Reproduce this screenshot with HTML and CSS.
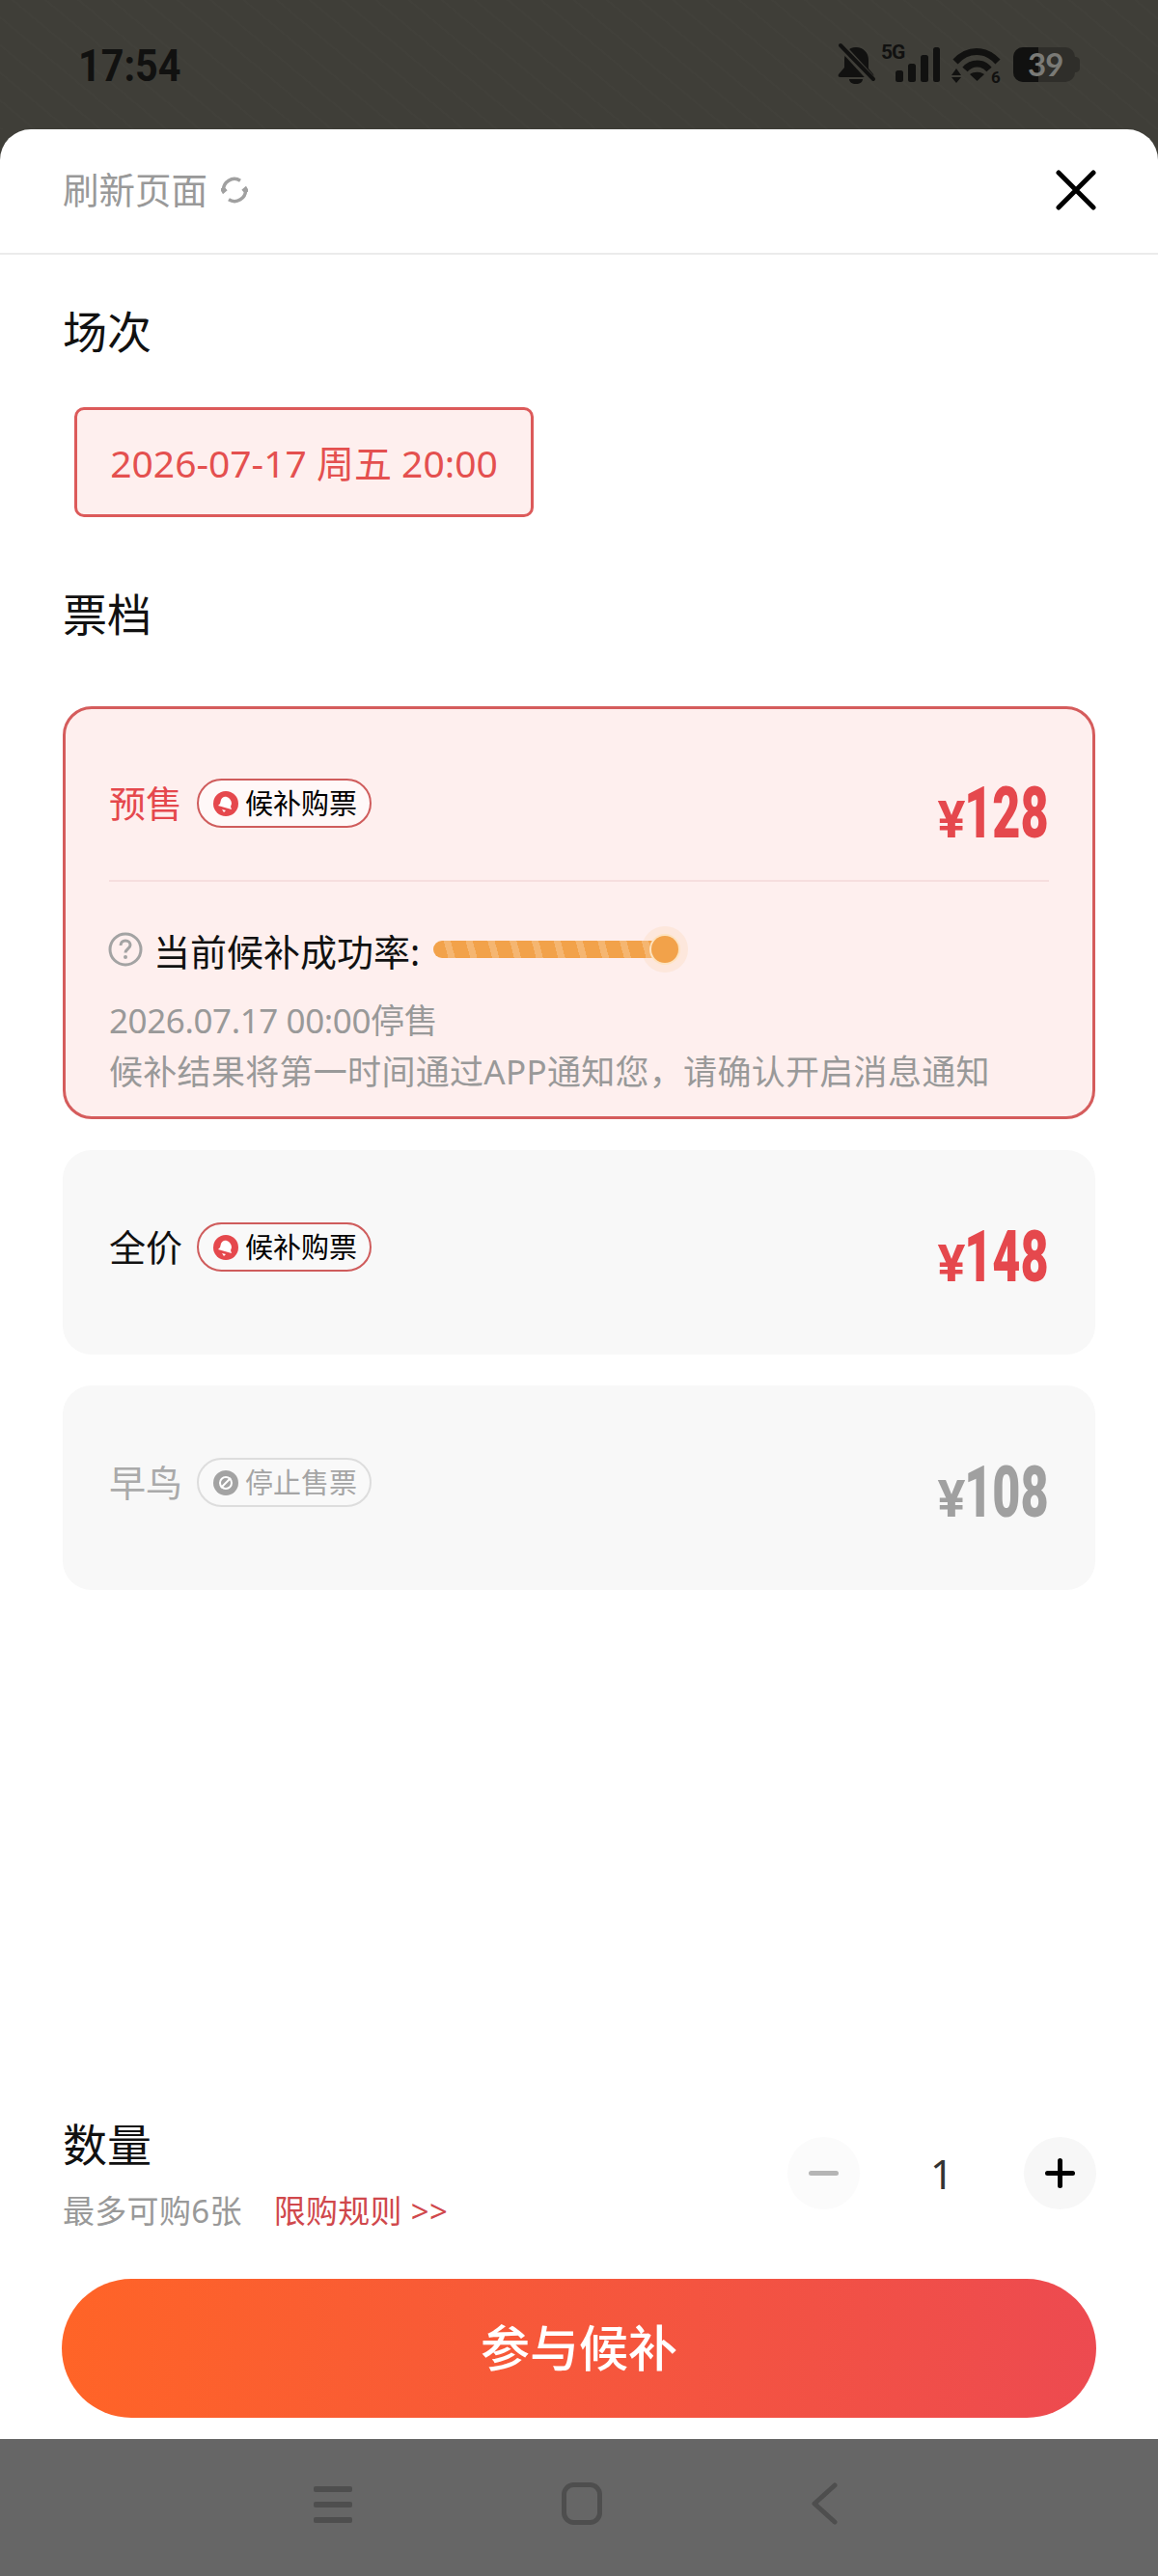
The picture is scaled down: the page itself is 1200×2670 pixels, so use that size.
FILE: index.html
```html
<!DOCTYPE html>
<html lang="zh">
<head>
  <meta charset="UTF-8">
  <meta name="viewport" content="width=device-width, initial-scale=1.0">
  <title>参与候补</title>
  <link rel="stylesheet" href="styles.css">
</head>
<body>
  <div class="phone">
    <!-- Status bar -->
    <div class="status-bar">
      <span class="clock">17:54</span>
      <svg class="status-icons" width="252" height="50" viewBox="870 43 252 50">
        <g fill="#111110">
          <path d="M889 50c-8 0-12 6-12 13v8l-6 7c-1 2 0 3 2 3h32c2 0 3-1 2-3l-5-6v-9c0-7-5-13-13-13z"/>
          <path d="M882 83h14c0 3-3 5-7 5s-7-2-7-5z"/>
        </g>
        <path d="M873 48l33 36" stroke="#3f3e38" stroke-width="8"/>
        <path d="M873 48l34 35" stroke="#111110" stroke-width="4" stroke-linecap="round"/>
        <text class="status-net" x="915" y="62">5G</text>
        <g fill="#111110">
          <rect x="930" y="74" width="8" height="12" rx="2.5"/>
          <rect x="943" y="67" width="8" height="19" rx="2.5"/>
          <rect x="956" y="58" width="8" height="28" rx="2.5"/>
          <rect x="969" y="50" width="7" height="36" rx="2.5"/>
          <path d="M1007 78c4-3 11-3 15 0l-7.500 7z"/>
          <path d="M993 72l-5 7h10zM993 87l-5-6h10z"/>
        </g>
        <g fill="none" stroke="#111110" stroke-width="7">
          <path d="M992 65c13-14 31-14 44 0"/>
          <path d="M1002 73c7-8 18-8 25 0"/>
        </g>
        <text class="status-wifi" x="1029" y="87">6</text>
        <rect x="1052" y="50" width="64" height="36" rx="10" fill="#2f2e2a"/>
        <path d="M1062 50h16v36h-16a10 10 0 0 1-10-10v-16a10 10 0 0 1 10-10z" fill="#111110"/>
        <path d="M1116 60c3 0 5 2 5 4v8c0 2-2 4-5 4z" fill="#2f2e2a"/>
        <text class="status-batt" x="1067" y="80">39</text>
      </svg>
    </div>

    <div class="sheet">
      <!-- Header -->
      <div class="sheet-header">
        <div class="refresh">
          <span>刷新页面</span>
          <svg width="28" height="28" viewBox="0 0 28 28" fill="none" stroke="#a0a0a0" stroke-width="3.500">
            <path d="M20 4.200A11.500 11.500 0 0 0 2.500 15"/>
            <path d="M0.500 12l2 3.500 3-2.500"/>
            <path d="M8 23.800A11.500 11.500 0 0 0 25.500 13"/>
            <path d="M27.500 16l-2-3.500-3 2.500"/>
          </svg>
        </div>
        <svg width="42" height="42" viewBox="0 0 42 42" stroke="#000" stroke-width="5" stroke-linecap="round">
          <path d="M3 3l36 36M39 3L3 39"/>
        </svg>
      </div>

      <div class="sheet-body">
        <h2 class="section-title">场次</h2>
        <div class="session-chip">2026-07-17 周五 20:00</div>

        <h2 class="section-title tickets-title">票档</h2>

        <!-- Ticket cards -->
        <div class="ticket ticket-active">
          <div class="ticket-row">
            <div class="ticket-name">
              <span class="name-text name-red">预售</span>
              <span class="pill">
                <svg class="pill-icon" width="26" height="26" viewBox="0 0 26 26">
                  <circle cx="13" cy="13" r="13" fill="#e5484d"/>
                  <path d="M14 6c-3-1-5 1-6 3l-1 4-2 2 14 4-1-3 1-3c0-3-2-6-5-7z" fill="#fff"/>
                  <path d="M9 19l4 1-2 2z" fill="#fff"/>
                </svg>
                候补购票
              </span>
            </div>
            <div class="price"><span class="yen">¥</span><span class="price-num">128</span></div>
          </div>
          <div class="ticket-detail">
            <div class="rate">
              <svg width="36" height="36" viewBox="0 0 36 36">
                <circle cx="18" cy="18" r="16" fill="none" stroke="#a3a3a3" stroke-width="3"/>
                <path d="M13 14c0-3 2-5 5-5s5 2 5 4.500c0 4-5 4-5 8" fill="none" stroke="#a3a3a3" stroke-width="3"/>
                <circle cx="18" cy="26" r="2" fill="#a3a3a3"/>
              </svg>
              <span class="rate-label">当前候补成功率:</span>
              <div class="rate-track"><span class="rate-knob"></span></div>
            </div>
            <p class="ticket-note note-date">2026.07.17 00:00停售</p>
            <p class="ticket-note note-info">候补结果将第一时间通过APP通知您，请确认开启消息通知</p>
          </div>
        </div>

        <div class="ticket">
          <div class="ticket-row">
            <div class="ticket-name">
              <span class="name-text">全价</span>
              <span class="pill">
                <svg class="pill-icon" width="26" height="26" viewBox="0 0 26 26">
                  <circle cx="13" cy="13" r="13" fill="#e5484d"/>
                  <path d="M14 6c-3-1-5 1-6 3l-1 4-2 2 14 4-1-3 1-3c0-3-2-6-5-7z" fill="#fff"/>
                  <path d="M9 19l4 1-2 2z" fill="#fff"/>
                </svg>
                候补购票
              </span>
            </div>
            <div class="price"><span class="yen">¥</span><span class="price-num">148</span></div>
          </div>
        </div>

        <div class="ticket ticket-off">
          <div class="ticket-row">
            <div class="ticket-name">
              <span class="name-text">早鸟</span>
              <span class="pill">
                <svg class="pill-icon" width="26" height="26" viewBox="0 0 26 26">
                  <circle cx="13" cy="13" r="13" fill="#a3a3a3"/>
                  <circle cx="13" cy="13" r="6" fill="none" stroke="#fff" stroke-width="2"/>
                  <path d="M8 18l10-10" stroke="#fff" stroke-width="2"/>
                </svg>
                停止售票
              </span>
            </div>
            <div class="price"><span class="yen">¥</span><span class="price-num">108</span></div>
          </div>
        </div>
      </div>

      <!-- Quantity and submit -->
      <div class="sheet-footer">
        <div class="quantity">
          <div>
            <h2 class="section-title">数量</h2>
            <div class="quantity-sub">
              <span>最多可购6张</span>
              <span class="rules">限购规则 &gt;&gt;</span>
            </div>
          </div>
          <div class="stepper">
            <span class="step-btn step-minus"></span>
            <span class="step-value">1</span>
            <span class="step-btn step-plus"></span>
          </div>
        </div>
        <div class="submit">参与候补</div>
      </div>
    </div>

    <!-- Android nav bar -->
    <div class="nav-bar">
      <svg width="42" height="42" viewBox="0 0 42 42" fill="#4e4e4e">
        <rect x="1" y="3" width="40" height="6" rx="2"/>
        <rect x="1" y="19" width="40" height="6" rx="2"/>
        <rect x="1" y="35" width="40" height="6" rx="2"/>
      </svg>
      <svg width="42" height="44" viewBox="0 0 42 44" fill="none" stroke="#4e4e4e" stroke-width="5">
        <rect x="2.500" y="2.500" width="37" height="39" rx="10"/>
      </svg>
      <svg width="28" height="44" viewBox="0 0 28 44" fill="none" stroke="#4e4e4e" stroke-width="5" stroke-linecap="round" stroke-linejoin="round">
        <path d="M25 3L4 22l21 19"/>
      </svg>
    </div>
  </div>
</body>
</html>
```

FILE: styles.css
```css
body {
  margin: 0;
  background-color: #666;
  font-family: "Noto Sans", "Noto Sans CJK SC", sans-serif;
}

h2, p {
  margin: 0;
  font-weight: normal;
}

.phone {
  display: flex;
  flex-direction: column;
  height: 2670px;
  background-color: #3f3e38;
}

.status-bar {
  display: flex;
  align-items: center;
  justify-content: space-between;
  height: 134px;
  padding: 0 80px 0 81px;
  background-color: #3f3e38;
  background-image: repeating-linear-gradient(40deg, rgba(255, 255, 255, 0.012) 0 2px, transparent 2px 22px);
}

.clock {
  display: inline-block;
  font-family: "Roboto", sans-serif;
  font-size: 47px;
  font-weight: bold;
  color: #111110;
  transform: scaleX(0.88);
  transform-origin: left center;
}

.status-net {
  font-family: "Roboto", sans-serif;
  font-size: 21px;
  font-weight: bold;
  letter-spacing: -1px;
  fill: #111110;
}

.status-wifi {
  font-family: "Roboto", sans-serif;
  font-size: 17px;
  font-weight: bold;
  fill: #111110;
}

.status-batt {
  font-family: "Lato", sans-serif;
  font-size: 33px;
  font-weight: bold;
  letter-spacing: -1px;
  fill: #7a7a76;
}

.sheet {
  display: flex;
  flex-direction: column;
  height: 2394px;
  background-color: #fff;
  border-radius: 32px 32px 0 0;
}

.sheet-header {
  box-sizing: border-box;
  display: flex;
  align-items: center;
  justify-content: space-between;
  height: 130px;
  padding: 0 64px 2px 65px;
  border-bottom: 2px solid #ebebeb;
}

.refresh {
  display: flex;
  align-items: center;
  gap: 14px;
  font-size: 37.500px;
  color: #999;
}

.refresh span {
  margin-bottom: 6px;
}

.sheet-body {
  padding: 47px 65px 0;
}

.section-title {
  font-size: 46px;
  line-height: 64px;
  color: #111;
}

.session-chip {
  box-sizing: border-box;
  display: flex;
  align-items: center;
  justify-content: center;
  width: 476px;
  height: 114px;
  margin: 47px 0 0 12px;
  padding-bottom: 3px;
  background-color: #feefee;
  border: 3px solid #dc5a5a;
  border-radius: 10px;
  font-size: 39px;
  color: #e4504f;
}

.tickets-title {
  margin-top: 68px;
  margin-bottom: 64px;
}

.ticket {
  box-sizing: border-box;
  height: 212px;
  margin-bottom: 32px;
  padding: 75px 48px 0;
  background-color: #f8f8f8;
  border-radius: 30px;
  color: #111;
}

.ticket-active {
  height: 428px;
  padding: 72px 45px 0;
  background-color: #feefee;
  border: 3px solid #d55c5c;
}

.ticket-row {
  display: flex;
  justify-content: space-between;
}

.ticket-name {
  display: flex;
  align-items: center;
  gap: 15px;
  height: 51px;
  font-size: 38px;
}

.name-text {
  margin-bottom: 4px;
}

.name-red {
  color: #e5484d;
}

.pill {
  box-sizing: border-box;
  display: flex;
  align-items: center;
  gap: 7px;
  width: 181px;
  height: 51px;
  padding: 0 0 3px 15px;
  background-color: #fff8f8;
  border: 2px solid #cf5c5c;
  border-radius: 26px;
  font-size: 29px;
  color: #000;
}

.pill-icon {
  margin-top: 3px;
}

.ticket:not(.ticket-active) .pill {
  background-color: #f9f9f9;
}

.price {
  display: flex;
  align-items: baseline;
  margin-top: -7px;
  font-family: "Roboto", sans-serif;
  font-weight: 900;
  line-height: 86px;
  color: #e5484d;
}

.yen {
  font-size: 54px;
  font-weight: bold;
}

/* no condensed face installed, so squeeze the digits */
.price-num {
  display: inline-block;
  margin-left: -42px;
  font-size: 74px;
  transform: scaleX(0.68);
  transform-origin: right center;
}

.ticket-off .ticket-name {
  color: #aaa;
}

.ticket-off .pill {
  border-color: #ddd;
  color: #a5a5a5;
}

.ticket-off .price {
  color: #a0a0a0;
}

.ticket-detail {
  margin-top: 19px;
  padding-top: 48px;
  border-top: 2px solid #f6dede;
}

.rate {
  position: relative;
  z-index: 0;
  display: flex;
  align-items: center;
  height: 44px;
  margin-left: -1px;
}

.rate-label {
  margin-left: 11px;
  font-size: 38px;
  color: #111;
}

.rate-track {
  position: relative;
  width: 240px;
  height: 18px;
  margin-left: 14px;
  border-radius: 9px;
  background-image: repeating-linear-gradient(75deg, #f2a24a 0 15px, #f5b671 15px 22px);
}

/* pale halo sits behind the bar, the knob in front of it */
.rate-track::before {
  content: "";
  position: absolute;
  z-index: -1;
  top: -15px;
  right: -24px;
  width: 48px;
  height: 48px;
  border-radius: 50%;
  background-color: #fde7dc;
}

.rate-knob {
  position: absolute;
  top: -5px;
  right: -14px;
  width: 28px;
  height: 28px;
  border-radius: 50%;
  background-color: #f2a24a;
  box-shadow: 0 0 0 2px #fde3c0;
}

.ticket-note {
  font-size: 35px;
  line-height: 50px;
  color: #999;
  white-space: nowrap;
}

.note-date {
  margin-top: 27px;
  margin-bottom: 3px;
  letter-spacing: -0.4px;
}

.note-info {
  letter-spacing: 0.3px;
}

.sheet-footer {
  margin-top: auto;
  padding: 0 64px 22px 65px;
}

.quantity {
  display: flex;
  align-items: center;
  justify-content: space-between;
}

.quantity-sub {
  display: flex;
  gap: 33px;
  margin-top: 16px;
  font-size: 33px;
  line-height: 44px;
  letter-spacing: 0.3px;
  color: #999;
}

.rules {
  color: #d0484c;
}

.stepper {
  display: flex;
  align-items: center;
}

.step-btn {
  position: relative;
  width: 75px;
  height: 75px;
  border-radius: 50%;
  background-color: #f7f7f7;
}

.step-btn::before,
.step-plus::after {
  content: "";
  position: absolute;
  top: 35px;
  left: 22px;
  width: 31px;
  height: 5px;
  border-radius: 3px;
  background-color: #000;
}

.step-plus::after {
  top: 22px;
  left: 35px;
  width: 5px;
  height: 31px;
}

.step-minus {
  background-color: #fbfbfb;
}

.step-minus::before {
  background-color: #b5b5b5;
}

.step-value {
  width: 170px;
  text-align: center;
  font-size: 42px;
  color: #333;
}

.submit {
  box-sizing: border-box;
  display: flex;
  align-items: center;
  justify-content: center;
  height: 144px;
  margin: 48px 0 0 -1px;
  padding-bottom: 6px;
  border-radius: 72px;
  background-image: linear-gradient(90deg, #ff6427, #ed4a50);
  font-size: 51px;
  font-weight: 500;
  color: #fff;
}

.nav-bar {
  display: flex;
  align-items: center;
  justify-content: center;
  gap: 216px;
  height: 142px;
  padding-right: 8px;
  padding-bottom: 8px;
  box-sizing: border-box;
  background-color: #666;
}
```
